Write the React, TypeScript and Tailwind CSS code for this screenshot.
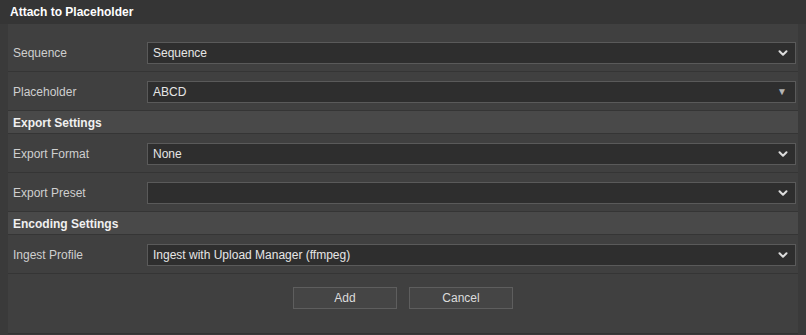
import { ChevronDown } from "lucide-react";

type Row =
  | { kind: "field"; label: string; value: string; arrow?: "chevron" | "triangle" }
  | { kind: "section"; title: string };

const rows: Row[] = [
  { kind: "field", label: "Sequence", value: "Sequence" },
  { kind: "field", label: "Placeholder", value: "ABCD", arrow: "triangle" },
  { kind: "section", title: "Export Settings" },
  { kind: "field", label: "Export Format", value: "None" },
  { kind: "field", label: "Export Preset", value: "" },
  { kind: "section", title: "Encoding Settings" },
  { kind: "field", label: "Ingest Profile", value: "Ingest with Upload Manager (ffmpeg)" },
];

function SelectBox({ value, arrow = "chevron" }: { value: string; arrow?: "chevron" | "triangle" }) {
  return (
    <div className="flex h-[22px] flex-1 items-center justify-between border border-[#5a5a5a] bg-[#2e2e2e] pl-[5px] pr-[5px]">
      <span className="text-[12px] text-[#e6e6e6]">{value}</span>
      {arrow === "chevron" ? (
        <ChevronDown size={14} strokeWidth={3.5} className="text-[#dcdcdc]" />
      ) : (
        <span className="mr-[3px] text-[10px] leading-none text-[#b4b4b4]">▼</span>
      )}
    </div>
  );
}

export default function App() {
  return (
    <div
      className="h-[335px] w-[806px] overflow-hidden bg-[#3a3a3a] text-[12px]"
      style={{ fontFamily: '"Liberation Sans", Arial, sans-serif' }}
    >
      <div className="flex h-[24px] items-center bg-[#353535] px-[10px] text-[12px] font-bold text-white">
        Attach to Placeholder
      </div>

      <div className="mx-[8px] h-[310px] border-b border-[#333333] bg-[#404040] pt-[9px]">
        {rows.map((row, i) =>
          row.kind === "section" ? (
            <div
              key={i}
              className="flex h-[23px] items-center border-b border-[#353535] bg-[#494949] px-[5px] pt-[1px] text-[12px] font-bold text-[#f0f0f0]"
            >
              {row.title}
            </div>
          ) : (
            <div
              key={i}
              className="flex items-center border-b border-[#353535] pb-[7px] pr-[2px] pt-[9px]"
            >
              <div className="w-[139px] pl-[5px] text-[#cfcfcf]">{row.label}</div>
              <SelectBox value={row.value} arrow={row.arrow} />
            </div>
          )
        )}

        <div className="flex justify-center gap-[12px] pt-[13px]">
          <button className="h-[22px] w-[104px] border border-[#5e5e5e] bg-[#454545] text-[12px] text-[#dcdcdc]">
            Add
          </button>
          <button className="h-[22px] w-[104px] border border-[#5e5e5e] bg-[#454545] text-[12px] text-[#dcdcdc]">
            Cancel
          </button>
        </div>
      </div>
    </div>
  );
}
